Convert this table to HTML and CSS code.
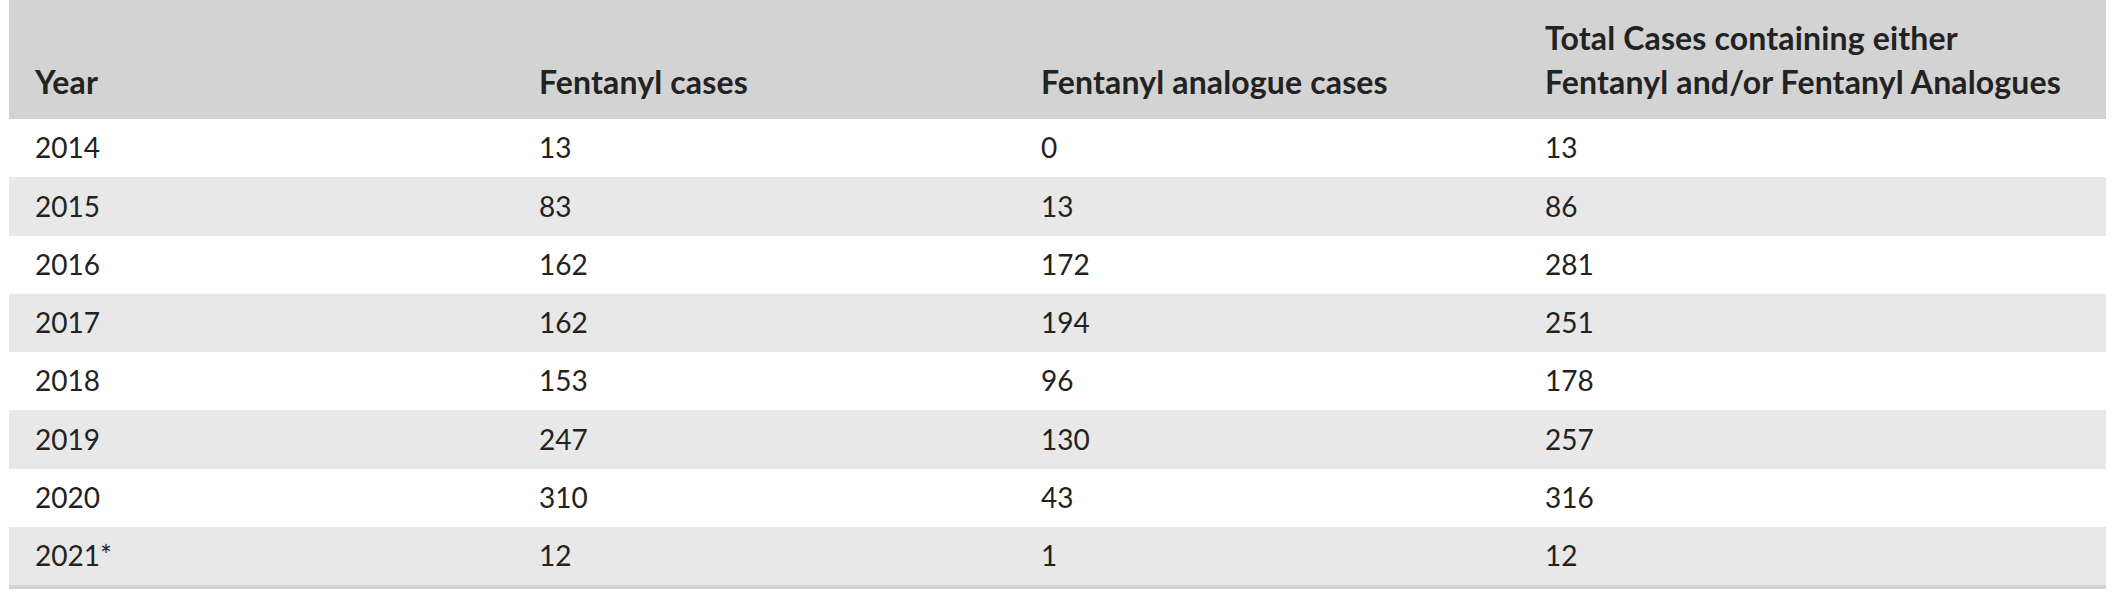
FILE: index.html
```html
<!DOCTYPE html>
<html lang="en">
<head>
<meta charset="utf-8">
<title>Fentanyl cases</title>
<link rel="stylesheet" href="styles.css">
</head>
<body>
<div class="wrap">
<table class="data">
  <colgroup>
    <col class="c1"><col class="c2"><col class="c3"><col class="c4">
  </colgroup>
  <thead>
    <tr>
      <th>Year</th>
      <th>Fentanyl cases</th>
      <th>Fentanyl analogue cases</th>
      <th>Total Cases containing either<br>Fentanyl and/or Fentanyl Analogues</th>
    </tr>
  </thead>
  <tbody>
    <tr><td>2014</td><td>13</td><td>0</td><td>13</td></tr>
    <tr><td>2015</td><td>83</td><td>13</td><td>86</td></tr>
    <tr><td>2016</td><td>162</td><td>172</td><td>281</td></tr>
    <tr><td>2017</td><td>162</td><td>194</td><td>251</td></tr>
    <tr><td>2018</td><td>153</td><td>96</td><td>178</td></tr>
    <tr><td>2019</td><td>247</td><td>130</td><td>257</td></tr>
    <tr><td>2020</td><td>310</td><td>43</td><td>316</td></tr>
    <tr><td>2021*</td><td>12</td><td>1</td><td>12</td></tr>
  </tbody>
</table>
</div>
</body>
</html>
```
FILE: styles.css
```css
html, body {
  margin: 0;
  padding: 0;
  background: #ffffff;
}
.wrap {
  padding-left: 9px;
}
.data {
  width: 2097px;
  table-layout: fixed;
  border-collapse: collapse;
  font-family: Lato, "Liberation Sans", sans-serif;
  font-size: 28px;
  line-height: 43.75px;
  color: #222222;
  border-bottom: 4px solid #d3d3d3;
}
.c1 { width: 504px; }
.c2 { width: 502px; }
.c3 { width: 504px; }
.c4 { width: 587px; }
.data th {
  background: #d3d3d3;
  font-size: 32px;
  font-weight: 700;
  letter-spacing: 0.15px;
  text-align: left;
  vertical-align: bottom;
  padding: 15.75px 26px;
}
.data td {
  padding: 7.25px 26px;
  text-align: left;
}
.data tbody tr:nth-child(even) td {
  background: #e8e8e8;
}
```
